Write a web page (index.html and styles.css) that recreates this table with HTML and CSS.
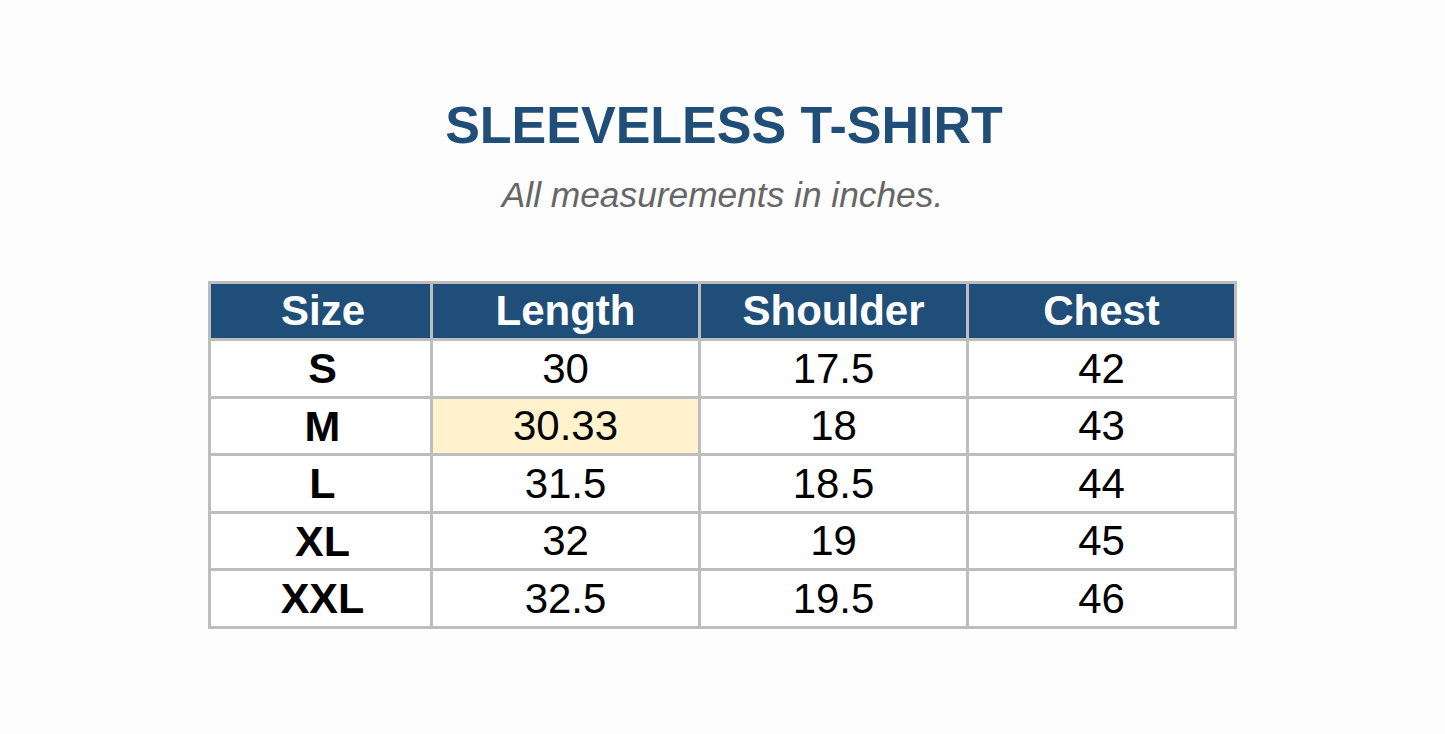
FILE: index.html
```html
<!DOCTYPE html>
<html lang="en">
<head>
<meta charset="utf-8">
<title>Sleeveless T-Shirt Size Chart</title>
<link rel="stylesheet" href="styles.css">
</head>
<body>
<main class="page">
  <h1 class="title">SLEEVELESS T-SHIRT</h1>
  <p class="subtitle">All measurements in inches.</p>
  <table class="chart">
    <colgroup>
      <col class="c-size">
      <col class="c-val">
      <col class="c-val">
      <col class="c-val">
    </colgroup>
    <thead>
      <tr><th>Size</th><th>Length</th><th>Shoulder</th><th>Chest</th></tr>
    </thead>
    <tbody>
      <tr><td class="size">S</td><td>30</td><td>17.5</td><td>42</td></tr>
      <tr><td class="size">M</td><td class="hl">30.33</td><td>18</td><td>43</td></tr>
      <tr><td class="size">L</td><td>31.5</td><td>18.5</td><td>44</td></tr>
      <tr><td class="size">XL</td><td>32</td><td>19</td><td>45</td></tr>
      <tr><td class="size">XXL</td><td>32.5</td><td>19.5</td><td>46</td></tr>
    </tbody>
  </table>
</main>
</body>
</html>
```
FILE: styles.css
```css
html, body {
  margin: 0;
  padding: 0;
  background: #fdfdfd;
}
body {
  font-family: "Liberation Sans", Arial, sans-serif;
}
.page {
  display: flex;
  flex-direction: column;
  align-items: center;
  padding-top: 96px;
}
.title {
  margin: 0 0 0 3px;
  font-size: 52px;
  font-weight: bold;
  color: #1f4e79;
  line-height: 1.15;
}
.subtitle {
  margin: 19px 0 0;
  font-size: 35.3px;
  font-style: italic;
  color: #666666;
  line-height: 1.15;
}
.chart {
  margin-top: 66px;
  border-collapse: collapse;
  table-layout: fixed;
  width: 1027px;
  border: 3px solid #bdbdbd;
}
.c-size { width: 222px; }
.c-val { width: 268px; }
.chart th,
.chart td {
  border: 3px solid #bdbdbd;
  padding: 0;
  text-align: center;
  font-size: 42px;
  line-height: 1;
}
.chart th {
  background: #1f4e79;
  color: #ffffff;
  font-weight: bold;
  height: 54px;
}
.chart td {
  background: #ffffff;
  color: #000000;
  height: 54.5px;
}
.chart td.size {
  font-weight: bold;
  font-size: 43px;
  padding-left: 4px;
}
.chart th:first-child {
  padding-left: 5px;
}
.chart td.hl {
  background: #fff2cc;
}
```
